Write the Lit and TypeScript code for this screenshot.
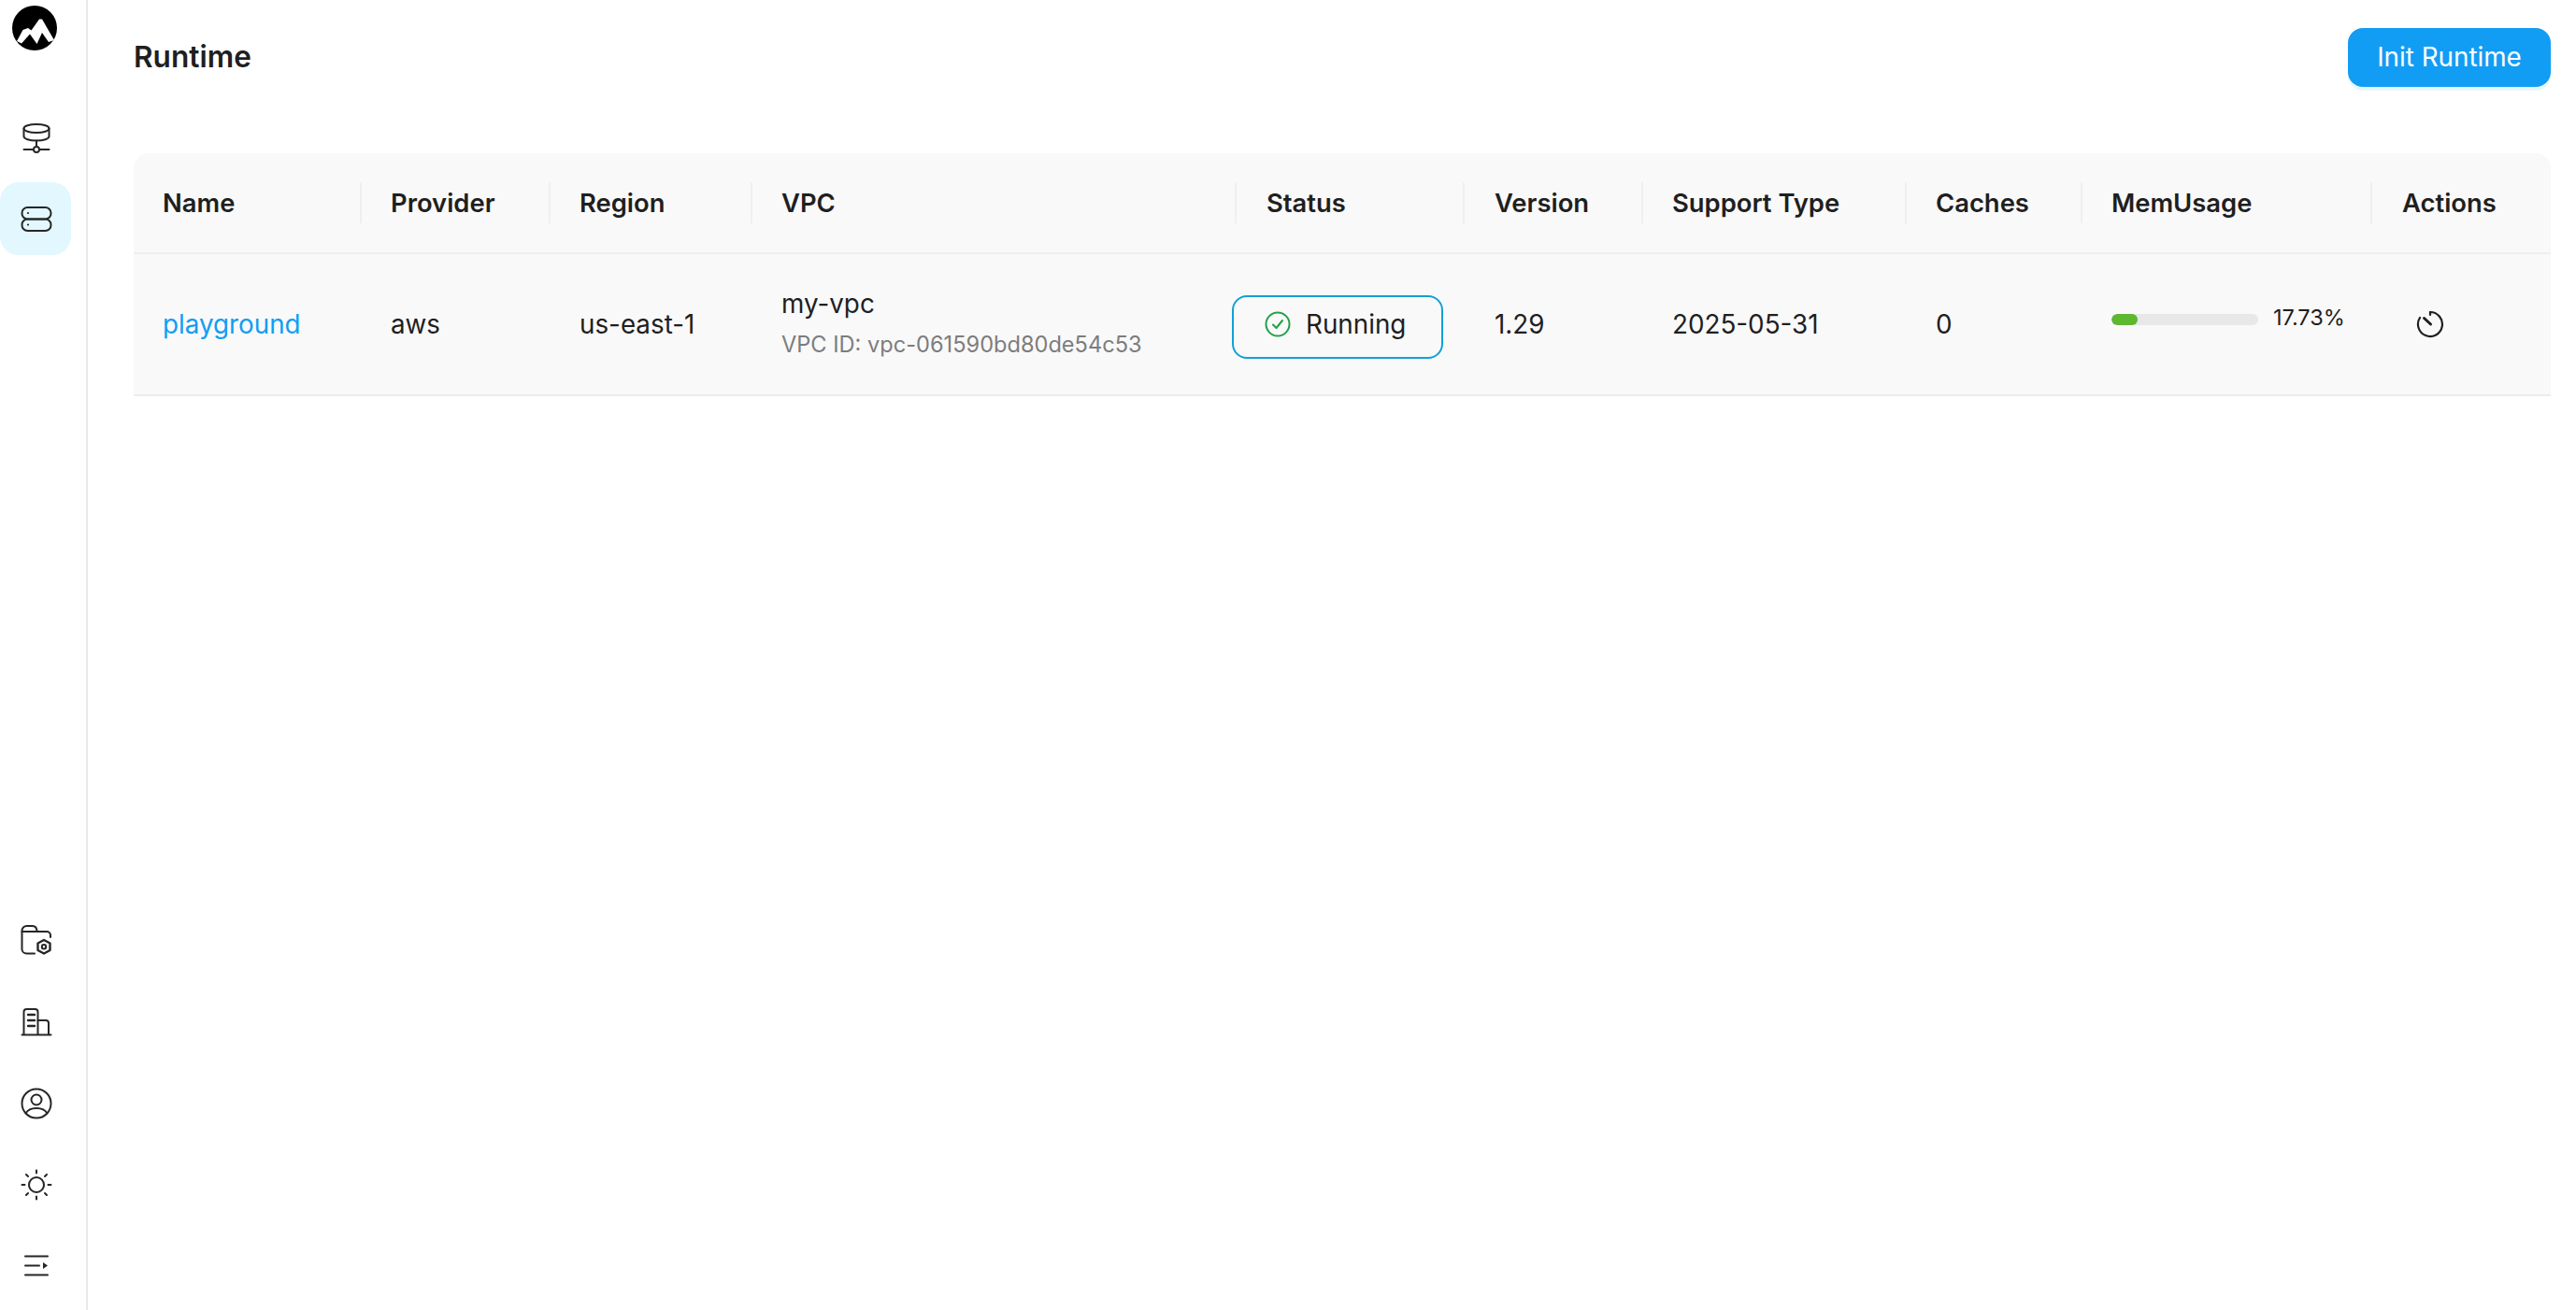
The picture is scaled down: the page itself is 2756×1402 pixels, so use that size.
import { LitElement, html, css, svg } from "lit";
import { customElement } from "lit/decorators.js";

const ic = (body: unknown) => html`<svg class="ic" viewBox="0 0 36 36" width="36" height="36" fill="none" stroke="#262626" stroke-width="2" stroke-linecap="round" stroke-linejoin="round">${body}</svg>`;

const icons = {
  db: svg`<ellipse cx="18" cy="8.500" rx="13.500" ry="4.500"/><path d="M4.500 8.500v8.500c0 2.500 6 4.500 13.500 4.500s13.500-2 13.500-4.500V8.500"/><path d="M18 21.500V28M4.500 31h10M21.500 31h10"/><circle cx="18" cy="31" r="3"/>`,
  server: svg`<rect x="2.500" y="6" width="31" height="12.500" rx="6"/><rect x="2.500" y="18.500" width="31" height="12.500" rx="6"/><circle cx="9" cy="12" r="1.100" fill="#262626" stroke="none"/><circle cx="9" cy="24.500" r="1.100" fill="#262626" stroke="none"/>`,
  folder: svg`<path d="M16 31.500H7.500a5 5 0 0 1-5-5V7a5 5 0 0 1 5-5h6c2.500 0 4 1 4.500 3l.8 3H29a4 4 0 0 1 4 4v2"/><path d="M2.500 8H19"/><path d="M26 17l6.500 3.500v7.500L26 31.500 19.500 28v-7.500z" stroke-width="2.400"/><circle cx="26" cy="24.300" r="2.200"/>`,
  building: svg`<path d="M4.500 31V7a3 3 0 0 1 3-3h9a3 3 0 0 1 3 3v24"/><path d="M19.500 16H28a3 3 0 0 1 3 3v12"/><path d="M2.500 31.500h31"/><path d="M9 10h7M9 16h7M9 22h7" stroke-width="2.400"/>`,
  user: svg`<circle cx="18" cy="18" r="15.500"/><circle cx="18" cy="14" r="5.500"/><path d="M6.500 28.500c2-3.500 6-5.500 11.500-5.500s9.500 2 11.500 5.500"/>`,
  sun: svg`<circle cx="18" cy="18" r="8"/><path d="M18 2.500v3M18 30.500v3M2.500 18h3M30.500 18h3M7 7l2 2M27 27l2 2M7 29l2-2M27 9l2-2"/>`,
  menu: svg`<path d="M6 7.500h24M6 17.500h15M6 27.500h24"/><path d="M25 14l5 3.500-5 3.500z" fill="#262626" stroke="none"/>`,
};

const columns = [
  { label: "Name", w: 243, pad: 31 },
  { label: "Provider", w: 202, pad: 32 },
  { label: "Region", w: 216, pad: 32 },
  { label: "VPC", w: 518, pad: 32 },
  { label: "Status", w: 244, pad: 33 },
  { label: "Version", w: 191, pad: 33 },
  { label: "Support Type", w: 282, pad: 32 },
  { label: "Caches", w: 188, pad: 32 },
  { label: "MemUsage", w: 310, pad: 32 },
  { label: "Actions", w: 192, pad: 33 },
];

@customElement("app-root")
export class AppRoot extends LitElement {
  static styles = css`
    :host {
      display: flex;
      width: 100%;
      height: 100vh;
      font-family: Inter, "Liberation Sans", sans-serif;
      color: #1f1f1f;
      background: #fff;
      font-size: 27.8px;
      overflow: hidden;
    }
    .side {
      box-sizing: border-box;
      width: 94px;
      height: 100%;
      flex: none;
      border-right: 2px solid #e9e9e9;
      display: flex;
      flex-direction: column;
      padding: 6px 0 8px;
    }
    .logo { width: 48px; height: 48px; margin: 0 0 54px 13px; display: block; }
    .nav { display: flex; flex-direction: column; gap: 9px; }
    .spacer { flex: 1; }
    .item {
      width: 76px;
      height: 78px;
      padding-left: 2px;
      box-sizing: border-box;
      display: flex;
      align-items: center;
      justify-content: center;
      border-radius: 20px;
    }
    .item.active { background: #e3f7ff; }
    .ic { display: block; }
    .main {
      flex: 1;
      min-width: 0;
      padding: 30px 27px 0 49px;
    }
    .head {
      display: flex;
      justify-content: space-between;
      align-items: center;
      height: 63px;
      margin-bottom: 71px;
    }
    h1 { margin: -2px 0 0; font-size: 31.6px; font-weight: 600; }
    .btn {
      box-sizing: border-box;
      width: 217px;
      height: 63px;
      border: 0;
      border-radius: 16px;
      background: #129df4;
      color: #fff;
      font: 400 27.8px Inter, "Liberation Sans", sans-serif;
      box-shadow: 0 4px 0 #e6f7ff;
      padding: 0 0 2px;
    }
    .table { background: #f9f9f9; border-radius: 16px 16px 0 0; }
    .row { display: flex; }
    .row.h { height: 106px; border-bottom: 2px solid #efefef; }
    .row.b { height: 150px; border-bottom: 2px solid #ececec; }
    .cell {
      box-sizing: border-box;
      padding-right: 12px;
      display: flex;
      align-items: center;
      flex: none;
      position: relative;
      white-space: nowrap;
    }
    .h .cell { font-weight: 600; font-size: 27.4px; }
    .h .cell.sep::before {
      content: "";
      position: absolute;
      left: -1px;
      top: 31px;
      height: 44px;
      width: 2px;
      background: #efefef;
    }
    .link { color: #129df4; }
    .vpc { display: flex; flex-direction: column; gap: 12px; margin-top: -4px; }
    .vpc small { font-size: 23.6px; color: #7d7d7d; }
    .badge {
      box-sizing: border-box;
      margin: 5px 0 0 -4px;
      width: 226px;
      height: 68px;
      border: 2px solid #12a0d8;
      border-radius: 16px;
      display: flex;
      align-items: center;
      gap: 16px;
      padding: 0 0 5px 33px;
    }
    .mem { display: flex; align-items: center; gap: 16px; margin-top: -15px; font-size: 23.5px; }
    .track { width: 157px; height: 12px; margin-top: 4px; border-radius: 6px; background: #e8e8e8; overflow: hidden; }
    .fill { height: 100%; border-radius: 6px; background: #5cb82f; }
    .timer { margin: 0 0 0 15px; }
  `;

  render() {
    const c = (i: number) => `width:${columns[i].w}px;padding-left:${columns[i].pad}px`;
    return html`
      <aside class="side">
        <svg class="logo" viewBox="0 0 48 48">
          <circle cx="24" cy="24" r="24" fill="#000"/>
          <path d="M5 38L11.500 26l5.500-2 3.500 2.500L29 14.500h3L45 37l-6 2-7-10-5.500 12-7.500-10.500-9 10z" fill="#fff"/>
        </svg>
        <nav class="nav">
          <div class="item">${ic(icons.db)}</div>
          <div class="item active">${ic(icons.server)}</div>
        </nav>
        <div class="spacer"></div>
        <nav class="nav">
          <div class="item">${ic(icons.folder)}</div>
          <div class="item">${ic(icons.building)}</div>
          <div class="item">${ic(icons.user)}</div>
          <div class="item">${ic(icons.sun)}</div>
          <div class="item">${ic(icons.menu)}</div>
        </nav>
      </aside>
      <main class="main">
        <header class="head">
          <h1>Runtime</h1>
          <button class="btn">Init Runtime</button>
        </header>
        <section class="table">
          <div class="row h">
            ${columns.map((col, i) => html`<div class="cell ${i ? "sep" : ""}" style=${c(i)}>${col.label}</div>`)}
          </div>
          <div class="row b">
            <div class="cell link" style=${c(0)}>playground</div>
            <div class="cell" style=${c(1)}>aws</div>
            <div class="cell" style=${c(2)}>us-east-1</div>
            <div class="cell" style=${c(3)}>
              <div class="vpc"><span>my-vpc</span><small>VPC ID: vpc-061590bd80de54c53</small></div>
            </div>
            <div class="cell" style="width:${columns[4].w}px">
              <div class="badge">
                <svg width="28" height="28" viewBox="0 0 28 28" fill="none" stroke="#22a04a" stroke-width="2" stroke-linecap="round" stroke-linejoin="round"><circle cx="14" cy="14" r="12.500"/><path d="M9 14.500l3.500 3.500 6.500-8"/></svg>
                <span>Running</span>
              </div>
            </div>
            <div class="cell" style=${c(5)}>1.29</div>
            <div class="cell" style=${c(6)}>2025-05-31</div>
            <div class="cell" style=${c(7)}>0</div>
            <div class="cell" style=${c(8)}>
              <div class="mem">
                <div class="track"><div class="fill" style="width:17.73%"></div></div>
                <span>17.73%</span>
              </div>
            </div>
            <div class="cell" style=${c(9)}>
              <svg class="timer" width="30" height="30" viewBox="0 0 30 30" fill="none" stroke="#1f1f1f" stroke-width="2.200" stroke-linecap="round"><path d="M15 2a13 13 0 1 1-11 6"/><path d="M15 2v3"/><path d="M8.500 8.500l7 6.500" stroke-width="3"/></svg>
            </div>
          </div>
        </section>
      </main>
    `;
  }
}
